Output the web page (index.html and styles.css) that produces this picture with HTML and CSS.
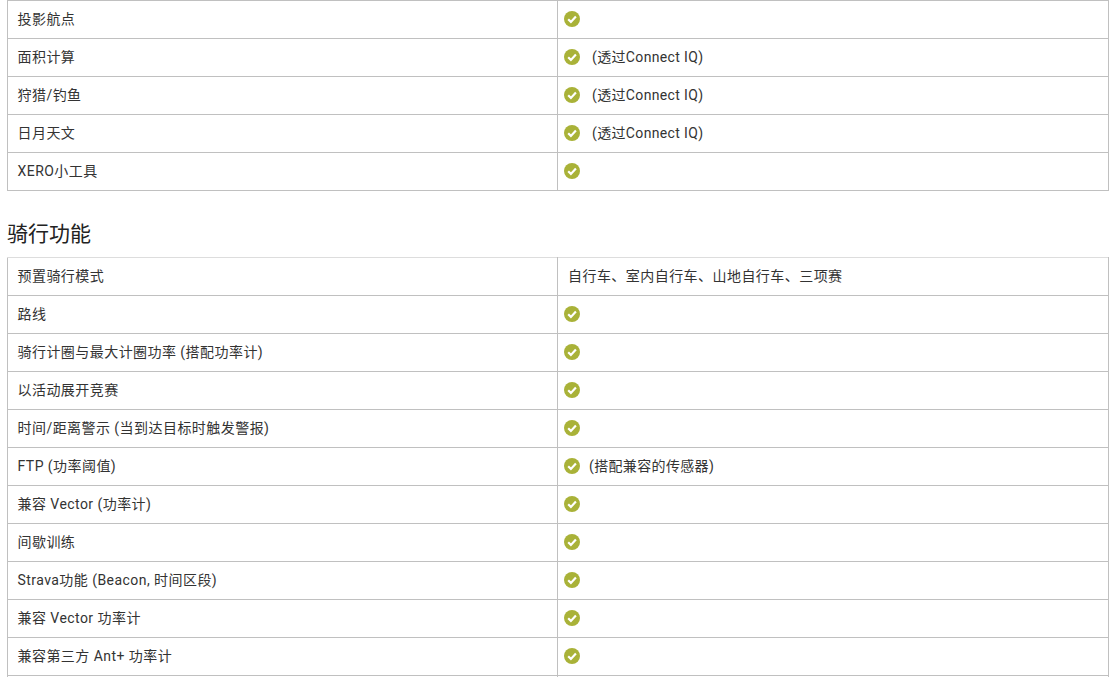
FILE: index.html
```html
<!DOCTYPE html>
<html lang="zh-CN">
<head>
<meta charset="utf-8">
<title>功能</title>
<link rel="stylesheet" href="styles.css">
</head>
<body>
<svg class="defs" width="0" height="0" aria-hidden="true">
  <symbol id="ok" viewBox="0 0 16 16">
    <circle cx="8" cy="8" r="8" fill="#a9b238"/>
    <path d="M4.2 8.3 L6.9 10.9 L11.9 5.6" fill="none" stroke="#fff" stroke-width="2.2"/>
  </symbol>
</svg>
<main class="page">
  <table class="specs">
    <tr><td>投影航点</td><td><svg class="ok"><use href="#ok"/></svg></td></tr>
    <tr><td>面积计算</td><td><svg class="ok"><use href="#ok"/></svg><span class="note wide">(透过Connect IQ)</span></td></tr>
    <tr><td>狩猎/钓鱼</td><td><svg class="ok"><use href="#ok"/></svg><span class="note wide">(透过Connect IQ)</span></td></tr>
    <tr><td>日月天文</td><td><svg class="ok"><use href="#ok"/></svg><span class="note wide">(透过Connect IQ)</span></td></tr>
    <tr><td>XERO小工具</td><td><svg class="ok"><use href="#ok"/></svg></td></tr>
  </table>
  <h2 class="title">骑行功能</h2>
  <table class="specs second">
    <tr><td>预置骑行模式</td><td><span class="modes">自行车、室内自行车、山地自行车、三项赛</span></td></tr>
    <tr><td>路线</td><td><svg class="ok"><use href="#ok"/></svg></td></tr>
    <tr><td>骑行计圈与最大计圈功率 (搭配功率计)</td><td><svg class="ok"><use href="#ok"/></svg></td></tr>
    <tr><td>以活动展开竞赛</td><td><svg class="ok"><use href="#ok"/></svg></td></tr>
    <tr><td>时间/距离警示 (当到达目标时触发警报)</td><td><svg class="ok"><use href="#ok"/></svg></td></tr>
    <tr><td>FTP (功率阈值)</td><td><svg class="ok"><use href="#ok"/></svg><span class="note">(搭配兼容的传感器)</span></td></tr>
    <tr><td>兼容 Vector (功率计)</td><td><svg class="ok"><use href="#ok"/></svg></td></tr>
    <tr><td>间歇训练</td><td><svg class="ok"><use href="#ok"/></svg></td></tr>
    <tr><td>Strava功能 (Beacon, 时间区段)</td><td><svg class="ok"><use href="#ok"/></svg></td></tr>
    <tr><td>兼容 Vector 功率计</td><td><svg class="ok"><use href="#ok"/></svg></td></tr>
    <tr><td>兼容第三方 Ant+ 功率计</td><td><svg class="ok"><use href="#ok"/></svg></td></tr>
    <tr class="tail"><td></td><td></td></tr>
  </table>
</main>
</body>
</html>
```
FILE: styles.css
```css
html, body {
  margin: 0;
  padding: 0;
  height: 677px;
  overflow: hidden;
  background: #fff;
}
.defs { position: absolute; }
.page {
  width: 1102px;
  margin-left: 7px;
  font-family: Roboto, "Noto Sans CJK SC", sans-serif;
  font-size: 14px;
  letter-spacing: 0.45px;
  color: #333;
}
.specs {
  width: 1102px;
  table-layout: fixed;
  border-collapse: collapse;
}
.specs td {
  height: 38px;
  padding: 0 0 2px 9.5px;
  border: 1px solid #c0c0c0;
  box-sizing: border-box;
  vertical-align: middle;
  line-height: 20px;
}
.specs td:first-child { width: 550px; }
.specs td:last-child { padding-left: 6px; }
.second tr:first-child td { border-top-color: #ddd; }
.specs .tail td {
  height: 1px;
  padding: 0;
  line-height: 0;
  border-bottom: none;
}
.title {
  margin: 0;
  padding: 29px 0 8px;
  font-size: 21px;
  font-weight: 400;
  line-height: 29px;
  letter-spacing: 0;
  color: #222;
}
.ok {
  width: 16px;
  height: 16px;
  vertical-align: -3px;
}
.note { margin-left: 9px; letter-spacing: 0.35px; }
.note.wide { margin-left: 12px; }
.modes { margin-left: 4px; }
```
